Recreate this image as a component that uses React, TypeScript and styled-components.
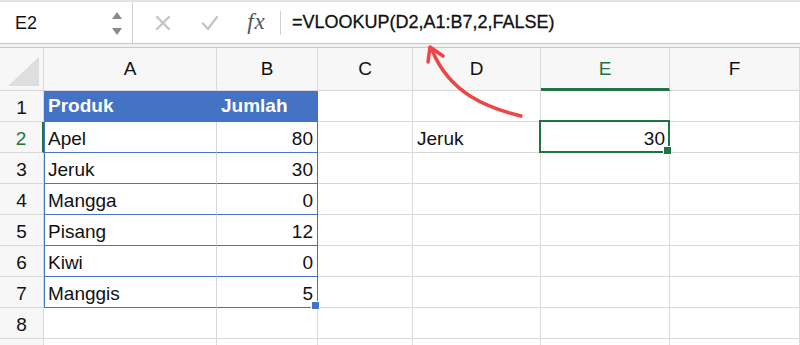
import React from "react";
import styled, { createGlobalStyle, css } from "styled-components";

const GlobalStyle = createGlobalStyle`
  body {
    margin: 0;
    background: #ffffff;
    font-family: "Liberation Sans", Arial, sans-serif;
  }
`;

const BLUE = "#4472c4";
const GREEN = "#217346";
const GRID = "#d9d9d9";

const Page = styled.div`
  position: relative;
  width: 800px;
  height: 345px;
  overflow: hidden;
  background: #fff;
`;

const FormulaBar = styled.div`
  display: flex;
  height: 44px;
  box-sizing: border-box;
  border-top: 2px solid #e4e4e4;
  border-bottom: 1px solid #c9c9c9;
  background: #fff;
`;

const NameBox = styled.div`
  width: 133px;
  box-sizing: border-box;
  display: flex;
  align-items: center;
  justify-content: space-between;
  padding: 2px 10px 0 15px;
  border-right: 1px solid #d0d0d0;
  font-size: 18px;
  color: #111;
`;

const Spinner = styled.div`
  display: flex;
  flex-direction: column;
  gap: 9px;
`;

const Tri = styled.div<{ $down?: boolean }>`
  width: 0;
  height: 0;
  border-left: 5px solid transparent;
  border-right: 5px solid transparent;
  ${(p) =>
    p.$down
      ? css`border-top: 7px solid #8a8a8a;`
      : css`border-bottom: 7px solid #8a8a8a;`}
`;

const Tools = styled.div`
  display: flex;
  align-items: center;
  padding-left: 6px;
`;

const ToolSlot = styled.div`
  width: 47px;
  display: flex;
  justify-content: center;
  align-items: center;
`;

const Fx = styled.span`
  font-family: "Liberation Serif", "Times New Roman", serif;
  font-style: italic;
  font-size: 23px;
  color: #555;
  letter-spacing: 1px;
  margin-top: -2px;
`;

const Separator = styled.div`
  width: 1px;
  height: 24px;
  align-self: center;
  background: #cfcfcf;
`;

const FormulaText = styled.div`
  display: flex;
  align-items: center;
  padding: 0 0 1px 11px;
  font-size: 18px;
  color: #111;
  -webkit-text-stroke: 0.3px #111;
`;

const Gap = styled.div`
  height: 3px;
  background: #f1f1f1;
`;

const Sheet = styled.div`
  display: grid;
  grid-template-columns: 44px 173px 101px 95px 128px 129px 130px;
  grid-template-rows: 43px repeat(9, 31px);
  border-top: 1px solid #c9c9c9;
`;

const HeadCell = styled.div<{ $active?: boolean }>`
  box-sizing: border-box;
  display: flex;
  align-items: center;
  justify-content: center;
  background: #f7f7f7;
  border-right: 1px solid ${GRID};
  border-bottom: 1px solid ${GRID};
  font-size: 19px;
  color: ${(p) => (p.$active ? GREEN : "#111")};
  ${(p) =>
    p.$active &&
    css`
      border-bottom: 3px solid ${GREEN};
      padding-top: 2px;
    `}
`;

const Corner = styled(HeadCell)`
  position: relative;
`;

const CornerMark = styled.div`
  position: absolute;
  left: 8px;
  right: 4px;
  top: 9px;
  bottom: 4px;
  background: #dedede;
  clip-path: polygon(0 100%, 100% 0, 100% 100%);
`;

const RowHead = styled.div<{ $active?: boolean }>`
  box-sizing: border-box;
  display: flex;
  align-items: center;
  justify-content: center;
  padding-top: 3px;
  background: #f7f7f7;
  border-right: 1px solid ${GRID};
  border-bottom: 1px solid ${GRID};
  font-size: 19px;
  color: ${(p) => (p.$active ? GREEN : "#111")};
  ${(p) =>
    p.$active &&
    css`
      border-right: 2px solid ${GREEN};
    `}
`;

type CellProps = {
  $align?: "left" | "right";
  $title?: boolean;
  $tableLeft?: boolean;
  $tableRight?: boolean;
  $tableBottom?: boolean;
  $selected?: boolean;
};

const Cell = styled.div<CellProps>`
  position: relative;
  box-sizing: border-box;
  display: flex;
  align-items: center;
  justify-content: ${(p) => (p.$align === "right" ? "flex-end" : "flex-start")};
  padding: 3px 4px 0 4px;
  background: #fff;
  border-right: 1px solid ${(p) => (p.$tableRight ? BLUE : GRID)};
  border-bottom: 1px solid ${(p) => (p.$tableBottom ? BLUE : GRID)};
  font-size: 19px;
  color: #111;
  white-space: nowrap;
  ${(p) => p.$tableLeft && css`box-shadow: inset 1px 0 ${BLUE};`}
  ${(p) =>
    p.$title &&
    css`
      background: ${BLUE};
      color: #fff;
      font-weight: bold;
      border-right-color: ${BLUE};
      border-bottom-color: ${BLUE};
      padding-top: 0;
    `}
  ${(p) =>
    p.$selected &&
    css`
      &::after {
        content: "";
        position: absolute;
        left: -2px;
        top: -2px;
        right: -1px;
        bottom: -1px;
        border: 2px solid ${GREEN};
      }
    `}
`;

const Handle = styled.span<{ $color: string }>`
  position: absolute;
  right: -3px;
  bottom: -3px;
  width: 7px;
  height: 7px;
  background: ${(p) => p.$color};
  border: 1px solid #fff;
  z-index: 2;
`;

const Overlay = styled.svg`
  position: absolute;
  left: 0;
  top: 0;
  pointer-events: none;
`;

const columns = ["A", "B", "C", "D", "E", "F"];

const values: Record<string, string> = {
  A1: "Produk",
  B1: "Jumlah",
  A2: "Apel",
  B2: "80",
  A3: "Jeruk",
  B3: "30",
  A4: "Mangga",
  B4: "0",
  A5: "Pisang",
  B5: "12",
  A6: "Kiwi",
  B6: "0",
  A7: "Manggis",
  B7: "5",
  D2: "Jeruk",
  E2: "30",
};

const numeric = (v: string | undefined) => !!v && /^\d+$/.test(v);

const App = () => {
  const rows = Array.from({ length: 9 }, (_, i) => i + 1);
  return (
    <Page>
      <GlobalStyle />
      <FormulaBar>
        <NameBox>
          E2
          <Spinner>
            <Tri />
            <Tri $down />
          </Spinner>
        </NameBox>
        <Tools>
          <ToolSlot>
            <svg width="16" height="16" viewBox="0 0 16 16">
              <path d="M2 2 L14 14 M14 2 L2 14" stroke="#c6c6c6" strokeWidth="2.4" strokeLinecap="round" />
            </svg>
          </ToolSlot>
          <ToolSlot>
            <svg width="18" height="16" viewBox="0 0 18 16">
              <path d="M2 8.5 L7 14 L16 2" stroke="#c6c6c6" strokeWidth="2.4" fill="none" strokeLinecap="round" strokeLinejoin="round" />
            </svg>
          </ToolSlot>
          <ToolSlot>
            <Fx>fx</Fx>
          </ToolSlot>
        </Tools>
        <Separator />
        <FormulaText>=VLOOKUP(D2,A1:B7,2,FALSE)</FormulaText>
      </FormulaBar>
      <Gap />
      <Sheet>
        <Corner>
          <CornerMark />
        </Corner>
        {columns.map((c) => (
          <HeadCell key={c} $active={c === "E"}>
            {c}
          </HeadCell>
        ))}
        {rows.map((r) => (
          <React.Fragment key={r}>
            {/* row 9 is only a sliver at the bottom edge, its number is not visible */}
            <RowHead $active={r === 2}>{r < 9 ? r : ""}</RowHead>
            {columns.map((c) => {
              const id = `${c}${r}`;
              const v = values[id];
              const inTable = (c === "A" || c === "B") && r <= 7;
              return (
                <Cell
                  key={id}
                  $align={numeric(v) ? "right" : "left"}
                  $title={inTable && r === 1}
                  $tableLeft={inTable && c === "A"}
                  $tableRight={inTable && c === "B"}
                  $tableBottom={inTable}
                  $selected={id === "E2"}
                >
                  {v}
                  {id === "B7" && <Handle $color={BLUE} />}
                  {id === "E2" && <Handle $color={GREEN} />}
                </Cell>
              );
            })}
          </React.Fragment>
        ))}
      </Sheet>
      <Overlay width="800" height="345" viewBox="0 0 800 345">
        <path
          d="M521 116 C 488 108, 450 94, 432 50"
          stroke="#ee4548"
          strokeWidth="3.5"
          fill="none"
          strokeLinecap="round"
        />
        <polyline
          points="428,62 430,47 443,56"
          stroke="#ee4548"
          strokeWidth="3.5"
          fill="none"
          strokeLinecap="round"
          strokeLinejoin="round"
        />
      </Overlay>
    </Page>
  );
};

export default App;
